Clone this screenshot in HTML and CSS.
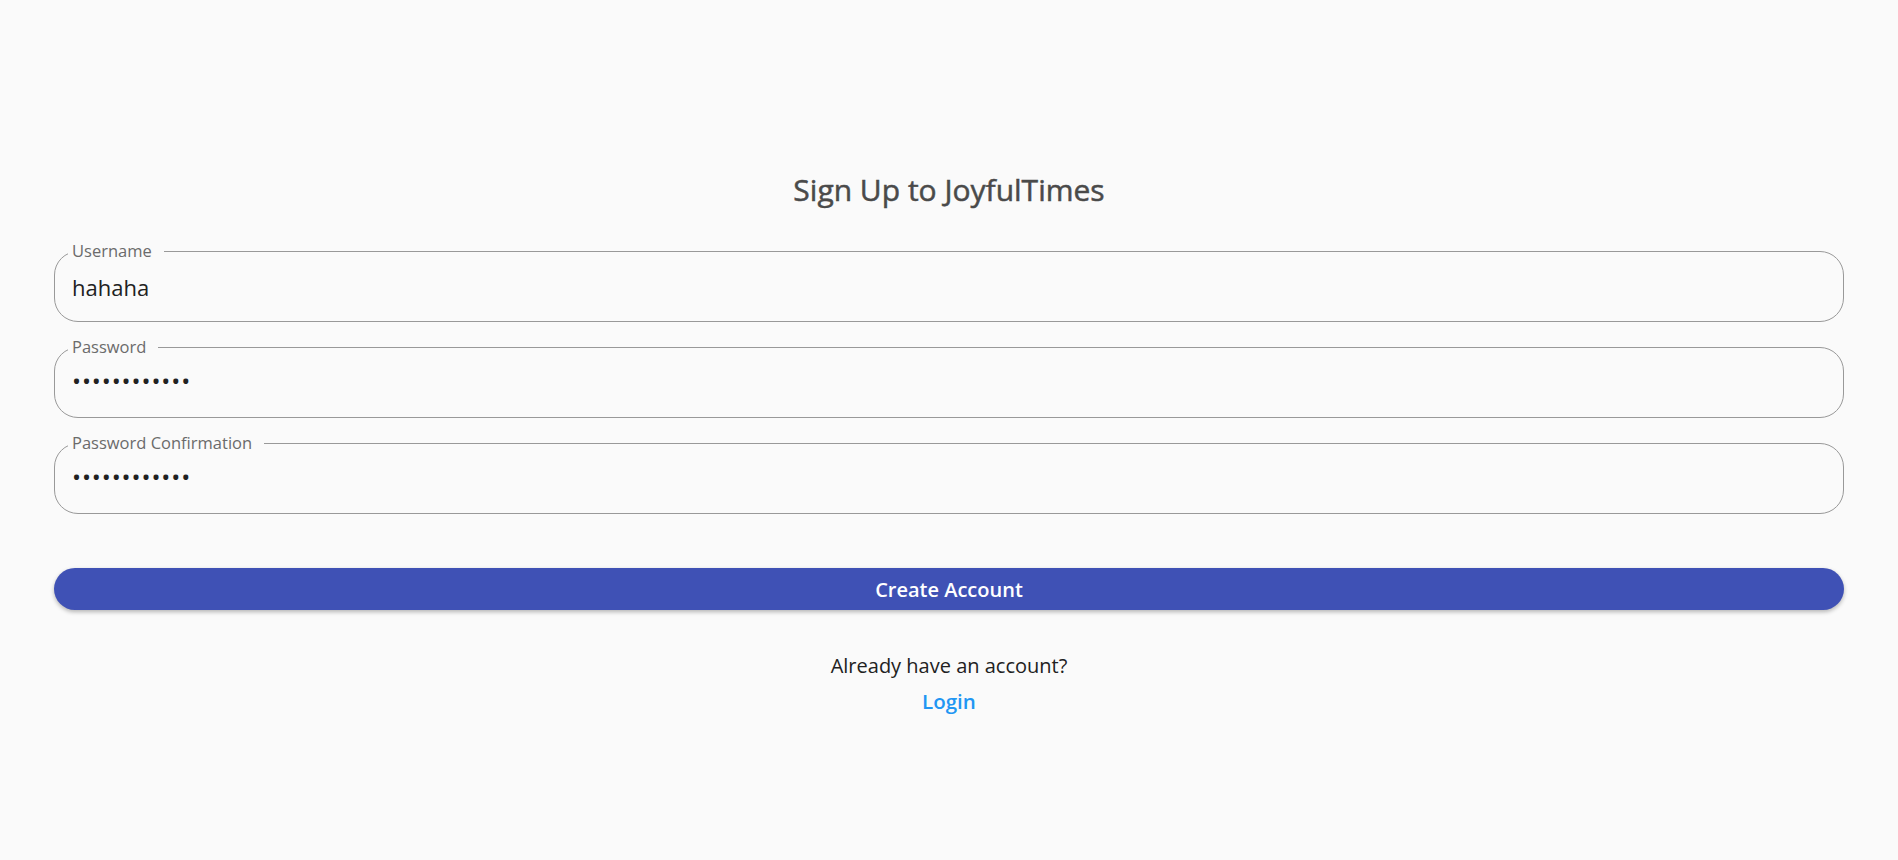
FILE: index.html
```html
<!DOCTYPE html>
<html lang="en">
<head>
<meta charset="utf-8">
<title>Sign Up to JoyfulTimes</title>
<link rel="stylesheet" href="styles.css">
</head>
<body>
<main class="page">
  <h1 class="title">Sign Up to JoyfulTimes</h1>
  <form class="form">
    <div class="field">
      <label class="field-label" for="username">Username</label>
      <input class="field-input" id="username" type="text" value="hahaha">
    </div>
    <div class="field">
      <label class="field-label" for="password">Password</label>
      <input class="field-input field-secret" id="password" type="password" value="abcdefghijkl">
    </div>
    <div class="field">
      <label class="field-label" for="confirm">Password Confirmation</label>
      <input class="field-input field-secret" id="confirm" type="password" value="abcdefghijkl">
    </div>
    <button class="submit" type="button">Create Account</button>
  </form>
  <p class="question">Already have an account?</p>
  <a class="login" href="#">Login</a>
</main>
</body>
</html>
```

FILE: styles.css
```css
html, body {
  margin: 0;
  padding: 0;
  background: #fafafa;
}

body {
  font-family: "Open Sans", "Noto Sans", "Liberation Sans", sans-serif;
  color: #212121;
}

.page {
  display: flex;
  flex-direction: column;
  align-items: center;
  padding: 171px 54px 0;
}

.title {
  margin: 0;
  font-size: 30px;
  line-height: 38px;
  font-weight: 500;
  color: #4a4a4a;
  -webkit-text-stroke: 0.5px #4a4a4a;
}

.form {
  align-self: stretch;
  display: flex;
  flex-direction: column;
  gap: 25px;
  margin-top: 42px;
}

.field {
  position: relative;
  height: 71px;
  box-sizing: border-box;
  border: 1px solid #999999;
  border-radius: 24px;
  display: flex;
  align-items: center;
  padding: 0 17px;
}

.field-label {
  position: absolute;
  top: -12px;
  left: 13px;
  padding: 0 12px 0 4px;
  background: #fafafa;
  font-size: 16.5px;
  line-height: 22px;
  color: #6b6b6b;
}

.field-input {
  flex: 1;
  border: none;
  outline: none;
  background: transparent;
  padding: 0;
  font-family: inherit;
  font-size: 22px;
  line-height: 30px;
  color: #212121;
}

.field-secret {
  font-size: 24px;
  letter-spacing: 0.9px;
  margin-top: -4px;
}

.submit {
  margin-top: 29px;
  height: 42px;
  border: none;
  border-radius: 21px;
  background: #3f51b5;
  color: #ffffff;
  font-family: inherit;
  font-size: 20px;
  font-weight: 600;
  box-shadow: 0 2px 4px rgba(0, 0, 0, 0.28);
  cursor: pointer;
}

.question {
  margin: 42px 0 0;
  font-size: 20px;
  line-height: 28px;
  color: #212121;
}

.login {
  margin-top: 7px;
  font-size: 20.5px;
  line-height: 28px;
  font-weight: 600;
  color: #2196f3;
  text-decoration: none;
}
```
